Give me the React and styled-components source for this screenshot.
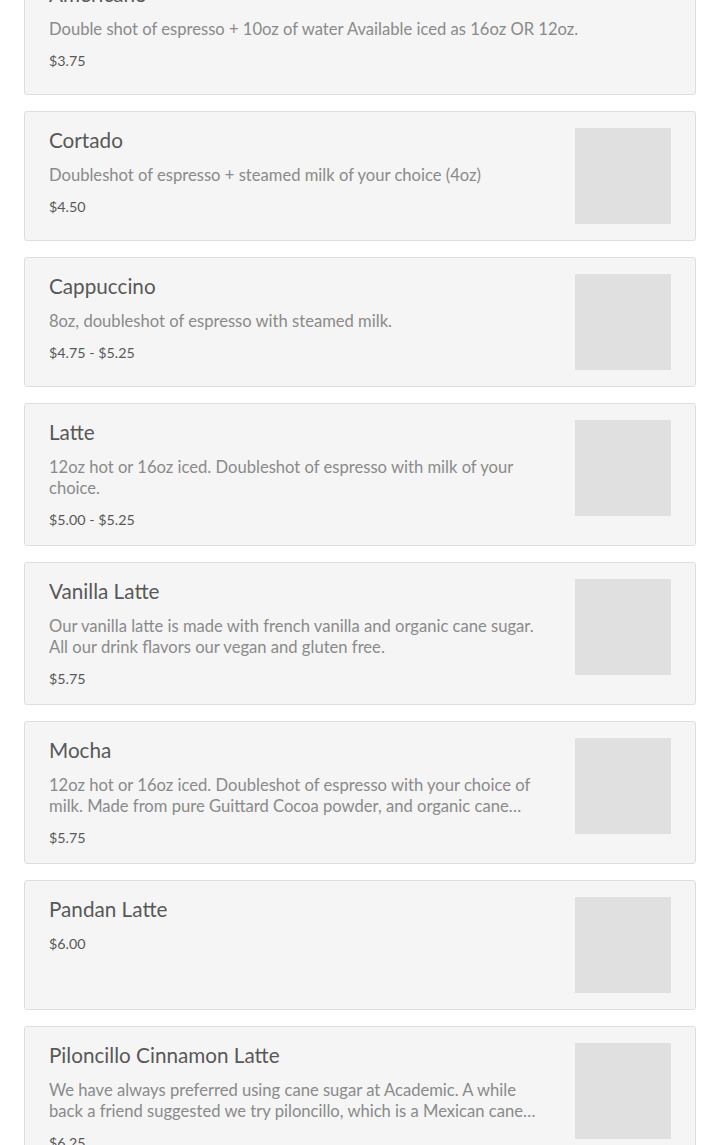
import React from "react";
import styled, { createGlobalStyle } from "styled-components";

const Global = createGlobalStyle`
  html, body { margin: 0; padding: 0; background: #ffffff; }
  body { font-family: Lato, "Open Sans", sans-serif; -webkit-font-smoothing: antialiased; }
  * { box-sizing: border-box; }
`;

const Page = styled.main`
  display: flex;
  flex-direction: column;
  gap: 16px;
  padding: 0 24px 24px;
  margin-top: -35px;
`;

const Card = styled.article`
  display: flex;
  gap: 24px;
  align-items: flex-start;
  min-height: 130px;
  padding: 16px 24px;
  background: #f5f5f5;
  border: 1px solid #dedede;
  border-radius: 3px;
`;

const Info = styled.div`
  flex: 1;
  min-width: 0;
  display: flex;
  flex-direction: column;
  gap: 11px;
`;

const Title = styled.h3`
  margin: 0;
  font-size: 20.7px;
  line-height: 24px;
  font-weight: 400;
  color: #585858;
`;

const Desc = styled.p`
  margin: 0 0 -2px;
  padding-top: 2px;
  font-size: 16.6px;
  line-height: 21px;
  color: #8a8a8a;
  display: -webkit-box;
  -webkit-line-clamp: 2;
  -webkit-box-orient: vertical;
  overflow: hidden;
`;

const Price = styled.span`
  margin-bottom: -1px;
  padding-top: 1px;
  font-size: 14.3px;
  line-height: 21px;
  color: #585858;
`;

const Thumb = styled.div`
  flex: 0 0 96px;
  width: 96px;
  height: 96px;
  background: #e0e0e0;
`;

const items = [
  { title: "Americano", desc: "Double shot of espresso + 10oz of water Available iced as 16oz OR 12oz.", price: "$3.75", img: false },
  { title: "Cortado", desc: "Doubleshot of espresso + steamed milk of your choice (4oz)", price: "$4.50", img: true },
  { title: "Cappuccino", desc: "8oz, doubleshot of espresso with steamed milk.", price: "$4.75 - $5.25", img: true },
  { title: "Latte", desc: "12oz hot or 16oz iced. Doubleshot of espresso with milk of your choice.", price: "$5.00 - $5.25", img: true },
  { title: "Vanilla Latte", desc: "Our vanilla latte is made with french vanilla and organic cane sugar. All our drink flavors our vegan and gluten free.", price: "$5.75", img: true },
  { title: "Mocha", desc: "12oz hot or 16oz iced. Doubleshot of espresso with your choice of milk. Made from pure Guittard Cocoa powder, and organic cane sugar.", price: "$5.75", img: true },
  { title: "Pandan Latte", desc: null, price: "$6.00", img: true },
  { title: "Piloncillo Cinnamon Latte", desc: "We have always preferred using cane sugar at Academic. A while back a friend suggested we try piloncillo, which is a Mexican cane sugar.", price: "$6.25", img: true },
];

export default function App() {
  return (
    <>
      <Global />
      <Page>
        {items.map((it) => (
          <Card key={it.title}>
            <Info>
              <Title>{it.title}</Title>
              {it.desc && <Desc>{it.desc}</Desc>}
              <Price>{it.price}</Price>
            </Info>
            {it.img && <Thumb />}
          </Card>
        ))}
      </Page>
    </>
  );
}
